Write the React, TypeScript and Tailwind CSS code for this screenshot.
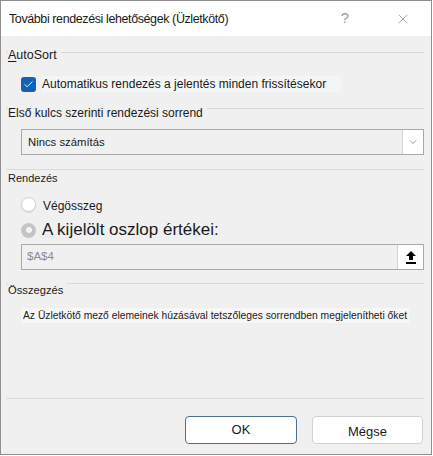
import { Check, ChevronDown, X } from 'lucide-react';

const font = "font-['Segoe_UI','Liberation_Sans',Arial,sans-serif]";

const SectionTitle = ({ label, overlap }: { label: React.ReactNode; overlap: string }) => (
    <div className="flex flex-col">
        <div className="h-px bg-[#dadada] ml-[5px] mr-[7px]" />
        <div className={`${overlap} ml-[7px] w-fit bg-[#f0f0f0] pr-1 text-[12px] leading-[16px] text-[#1a1a1a]`}>
            {label}
        </div>
    </div>
);

const UploadIcon = () => (
    <svg width="10" height="13" viewBox="0 0 10 13">
        <path d="M5 0 L10 5 L7 5 L7 9 L3 9 L3 5 L0 5 Z" fill="#000" />
        <rect x="0" y="11" width="10" height="2" fill="#000" />
    </svg>
);

export default function App() {
    return (
        <div className={`w-[433px] h-[456px] bg-white ${font}`}>
            <div className="w-[432px] h-[455px] border border-[#8f8f8f] flex flex-col">
                {/* title bar */}
                <div className="h-[35px] shrink-0 bg-white flex items-center pl-[8px] pr-[20px]">
                    <span className="text-[12.5px] tracking-[-0.4px] text-[#1a1a1a] flex-1 mt-[1px]">
                        További rendezési lehetőségek (Üzletkötő)
                    </span>
                    <span className="text-[15px] text-[#9a9a9a] mr-[46px]">?</span>
                    <X className="w-[16px] h-[16px] text-[#8a8a8a]" strokeWidth={1.1} />
                </div>

                <div className="flex-1 min-h-0 bg-[#f0f0f0] flex flex-col pt-[16px]">
                    <SectionTitle
                        overlap="-mt-[6px]"
                        label={
                            <span className="text-[12.5px]">
                                <span className="underline underline-offset-2">A</span>utoSort
                            </span>
                        }
                    />

                    <div className="flex items-center mt-[13px] ml-[20px]">
                        <div className="w-[15px] h-[15px] rounded-[3px] bg-[#0f62b6] flex items-center justify-center">
                            <Check className="w-[11px] h-[11px] text-white" strokeWidth={2} />
                        </div>
                        <span className="ml-[6px] bg-[#f2f6f6] pr-[15px] text-[12px] leading-[16px] text-[#1a1a1a]">
                            Automatikus rendezés a jelentés minden frissítésekor
                        </span>
                    </div>

                    <div className="mt-[16px]">
                        <SectionTitle overlap="-mt-[4px]" label="Első kulcs szerinti rendezési sorrend" />
                    </div>

                    <div className="mt-[8px] ml-[20px] mr-[7px] h-[26px] shrink-0 border border-[#a9a9a9] bg-[#f0f0f0] flex">
                        <div className="flex-1 flex items-center pl-[6px] text-[11.3px] text-[#1a1a1a]">Nincs számítás</div>
                        <div className="w-[21px] bg-white border-l border-[#d4d4d4] flex items-center justify-center">
                            <ChevronDown className="w-[12px] h-[12px] text-[#555]" strokeWidth={1.2} />
                        </div>
                    </div>

                    <div className="mt-[14px]">
                        <SectionTitle overlap="mt-[0px]" label={<span className="text-[11px]">Rendezés</span>} />
                    </div>

                    <div className="flex items-center mt-[8px] ml-[20px]">
                        <div className="w-[15px] h-[15px] rounded-full bg-white border border-[#cfcfcf] shadow-[0_1px_1px_rgba(0,0,0,0.08)]" />
                        <span className="ml-[7px] mt-[4px] text-[12px] leading-[16px] text-[#1a1a1a]">Végösszeg</span>
                    </div>

                    <div className="flex items-center mt-[5px] ml-[20px]">
                        <div className="w-[15px] h-[15px] rounded-full bg-[#c4c4c4] flex items-center justify-center">
                            <div className="w-[6px] h-[6px] rounded-full bg-[#f4f4f4]" />
                        </div>
                        <span className="ml-[6px] text-[17px] leading-[22px] text-[#1a1a1a]">A kijelölt oszlop értékei:</span>
                    </div>

                    <div className="mt-[3px] ml-[20px] mr-[7px] h-[26px] shrink-0 border border-[#a9a9a9] bg-[#f0f0f0] flex">
                        <div className="flex-1 flex items-center pl-[5px] text-[11.5px] text-[#8c8c8c]">$A$4</div>
                        <div className="w-[26px] bg-white border-l border-[#d4d4d4] flex items-center justify-center">
                            <UploadIcon />
                        </div>
                    </div>

                    <div className="mt-[13px]">
                        <SectionTitle overlap="-mt-[2px]" label={<span className="text-[11.2px]">Összegzés</span>} />
                    </div>

                    <div className="mt-[10px] ml-[20px] w-fit bg-[#f7f7f7] pl-[2px] pr-[2px] text-[10.3px] leading-[15px] text-[#1a1a1a] whitespace-nowrap">
                        Az Üzletkötő mező elemeinek húzásával tetszőleges sorrendben megjelenítheti őket
                    </div>

                    <div className="mt-[75px] h-px shrink-0 bg-[#dadada] ml-[5px] mr-[7px]" />

                    <div className="flex justify-end gap-[15px] mt-[17px] mr-[8px]">
                        <button className="w-[112px] h-[28px] bg-white border border-[#4d6f8a] rounded-[4px] text-[13px] text-[#1a1a1a]">
                            OK
                        </button>
                        <button className="w-[111px] h-[28px] bg-white border border-[#d2d2d2] rounded-[4px] text-[13px] text-[#1a1a1a] pt-[3px]">
                            Mégse
                        </button>
                    </div>
                </div>
            </div>
        </div>
    );
}
